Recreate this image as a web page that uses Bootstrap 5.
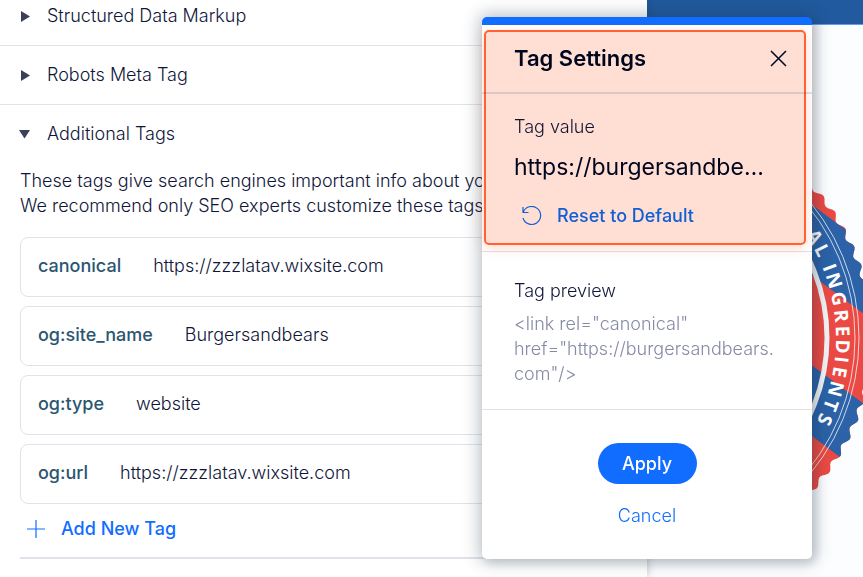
<!DOCTYPE html>
<html lang="en">
<head>
<meta charset="utf-8">
<meta name="viewport" content="width=device-width, initial-scale=1">
<title>Tag Settings</title>
<link href="https://cdn.jsdelivr.net/npm/bootstrap@5.3.0/dist/css/bootstrap.min.css" rel="stylesheet">
<style>
:root { --ink: #10163a; --blue: #116dff; --line: #dfe3eb; }
body { font-family: Inter, "Liberation Sans", sans-serif; font-size: 18px; font-weight: 300; line-height: 25px; color: var(--ink); background: #fcfdff; }
.stage { min-height: 100vh; overflow: hidden; }
.seo-panel { width: 75%; box-shadow: 0 0 8px rgba(22, 45, 61, .28); z-index: 1; }
.site-preview { min-width: 0; }
.site-bar { height: 25px; background: #215a9e; border-bottom: 1px solid #5f9bf5; }
.site-seal { width: 230px; margin: 83px 0 0 -1px; }
.section-list { margin-top: -13px; }
.section-toggle { height: 59px; padding: 0 20px 2px; gap: 15px; color: var(--ink); font-weight: 300; background: none; border: 0; border-bottom: 1px solid var(--line); text-align: left; }
.section-toggle.opened { height: 58px; border-bottom: 0; }
.section-toggle svg { width: 12px; height: 12px; fill: #3b4057; overflow: visible; }
.intro { padding: 5px 20px 0; }
.tag-cards { gap: 9px; padding: 19px 20px 0; }
.tag-card { height: 60px; border: 1px solid var(--line); border-radius: 8px; padding: 0 17px 3px; gap: 32px; }
.tag-card dt { font-weight: 500; color: #2b5672; }
.add-row { margin: 0 20px; padding: 12px 6px 16px; border-bottom: 2px solid var(--line); }
.text-action { color: var(--blue); background: none; border: 0; padding: 0; gap: 15px; font-weight: 500; }
.text-action svg { width: 20px; height: 20px; fill: none; stroke: currentColor; stroke-width: 1.2; }
.settings { top: 17px; right: 51px; width: 330px; z-index: 2; background: #fff; border-top: 8px solid var(--blue); border-radius: 5px; box-shadow: 0 0 16px 4px rgba(22, 45, 61, .26), 4px 4px 10px rgba(22, 45, 61, .12); }
.settings header { height: 69px; padding: 0 25px 0 32px; border-bottom: 2px solid var(--line); }
.settings h1 { font-size: 22px; font-weight: 600; color: #000624; }
.close-x { width: 17px; height: 17px; stroke: #000624; stroke-width: 1.5; }
.icon-btn { background: none; border: 0; }
.value-part { padding: 20px 40px 23px 32px; border-bottom: 1px solid var(--line); }
.value-text { font-size: 23px; line-height: 30px; margin: 13px 0 21px; font-weight: 400; color: #000624; border: 0; padding: 0; background: none; text-overflow: ellipsis; }
.preview-part { padding: 26px 32px 23px; border-bottom: 1px solid var(--line); }
.preview-part code { font: inherit; color: #868aa5; word-break: break-all; }
.apply { width: 99px; height: 41px; border-radius: 21px; background: var(--blue); color: #fff; border: 0; font-weight: 500; }
.foot-part { padding: 33px 0 31px; gap: 19px; }
.focus-box { inset: 5px 6px auto 2px; height: 215px; border: 2px solid #ff6334; border-radius: 5px; background: #ffded4; box-shadow: 0 3px 12px rgba(255, 99, 52, .25); mix-blend-mode: multiply; pointer-events: none; }
</style>
<script src="https://cdn.jsdelivr.net/npm/bootstrap@5.3.0/dist/js/bootstrap.bundle.min.js"></script>
</head>
<body>
<div class="stage d-flex position-relative">
  <main class="seo-panel bg-white flex-shrink-0 position-relative">
    <div class="section-list d-flex flex-column">
      <button class="section-toggle d-flex align-items-center" type="button"><svg viewBox="0 0 12 12" aria-hidden="true"><path d="M1 2 10 7.500 1 13z"/></svg>Structured Data Markup</button>
      <button class="section-toggle d-flex align-items-center" type="button"><svg viewBox="0 0 12 12" aria-hidden="true"><path d="M1 2 10 7.500 1 13z"/></svg>Robots Meta Tag</button>
      <button class="section-toggle opened d-flex align-items-center" type="button" aria-expanded="true"><svg viewBox="0 0 12 12" aria-hidden="true"><path d="M-1 3H10L4.500 11.500z"/></svg>Additional Tags</button>
    </div>
    <p class="intro mb-0 text-nowrap">These tags give search engines important info about your page.<br>We recommend only SEO experts customize these tags.</p>
    <dl class="tag-cards d-flex flex-column mb-0">
      <div class="tag-card d-flex align-items-center"><dt>canonical</dt><dd class="mb-0">https://zzzlatav.wixsite.com</dd></div>
      <div class="tag-card d-flex align-items-center"><dt>og:site_name</dt><dd class="mb-0">Burgersandbears</dd></div>
      <div class="tag-card d-flex align-items-center"><dt>og:type</dt><dd class="mb-0">website</dd></div>
      <div class="tag-card d-flex align-items-center"><dt>og:url</dt><dd class="mb-0">https://zzzlatav.wixsite.com</dd></div>
    </dl>
    <div class="add-row">
      <button class="text-action d-flex align-items-center" type="button"><svg viewBox="0 0 20 20" aria-hidden="true"><path d="M1 10H19M10 1V19"/></svg>Add New Tag</button>
    </div>
  </main>

  <aside class="site-preview flex-grow-1 overflow-hidden">
    <div class="site-bar"></div>
    <svg class="site-seal d-block" viewBox="646 108 230 430" role="img" aria-label="Ingredients seal">
      <defs><clipPath id="sealEdge"><path id="sealShape" d=""/></clipPath></defs>
      <g clip-path="url(#sealEdge)">
        <path fill="#eb4a44" d="M646 100H880V580H646z"/>
        <path fill="#2b62a8" d="M646 83 876 252V323L646 152zM646 242 876 413V484L646 312z"/>
      </g>
      <g fill="none" stroke="#fff">
        <circle cx="646" cy="338" r="181" stroke-width="5" stroke="#f2f3f5"/>
        <circle cx="646" cy="338" r="209" opacity=".75"/>
        <circle cx="646" cy="338" r="213" opacity=".75"/>
      </g>
      <g id="sealText" fill="#fff" font-family="Open Sans, sans-serif" font-weight="700" font-size="19" text-anchor="middle"></g>
    </svg>
  </aside>

  <section class="settings position-absolute" role="dialog" aria-labelledby="dialogTitle">
    <header class="d-flex align-items-center justify-content-between">
      <h1 class="mb-0" id="dialogTitle">Tag Settings</h1>
      <button class="icon-btn p-0 d-flex" type="button" aria-label="Close"><svg class="close-x" viewBox="0 0 17 17"><path d="M1 1 16 16M16 1 1 16"/></svg></button>
    </header>
    <div class="value-part">
      <label class="d-block" for="tagValue">Tag value</label>
      <input class="value-text d-block w-100" id="tagValue" type="text" value="https://burgersandbears.com">
      <button class="text-action d-flex align-items-center ms-2" type="button"><svg viewBox="0 0 20 20" aria-hidden="true"><path d="M1 1V6.500H6.500M1.200 6.300A9 9 0 1 1 1 12"/></svg>Reset to Default</button>
    </div>
    <div class="preview-part">
      <div class="mb-2">Tag preview</div>
      <code class="d-block">&lt;link rel="canonical"<br>href="https://burgersandbears.com"/&gt;</code>
    </div>
    <div class="foot-part d-flex flex-column align-items-center">
      <button class="apply" type="button">Apply</button>
      <button class="text-action fw-light" type="button">Cancel</button>
    </div>
    <div class="focus-box position-absolute"></div>
  </section>
</div>
<script>
// Wavy outline of the seal
const cx = 646, cy = 338;
let outline = "";
for (let a = 0; a < 360; a += 0.5) {
  const r = 225 + 2.5 * Math.sin(a * 72 * Math.PI / 180);
  const t = a * Math.PI / 180;
  outline += (a ? "L" : "M") + (cx + r * Math.cos(t)).toFixed(1) + " " + (cy + r * Math.sin(t)).toFixed(1);
}
document.getElementById("sealShape").setAttribute("d", outline + "Z");
// Lettering, each glyph turned to its angle on the ring
const letters = [["A", -31], ["L", -26.5], ["I", -21], ["N", -17], ["G", -11.5], ["R", -6.5], ["E", -2], ["D", 2.5], ["I", 6.300], ["E", 10], ["N", 15], ["T", 20], ["S", 24.5]];
document.getElementById("sealText").innerHTML = letters.map(([c, a]) =>
  `<text x="${cx}" y="${cy - 190}" transform="rotate(${a + 90} ${cx} ${cy})">${c}</text>`).join("");
</script>
</body>
</html>
